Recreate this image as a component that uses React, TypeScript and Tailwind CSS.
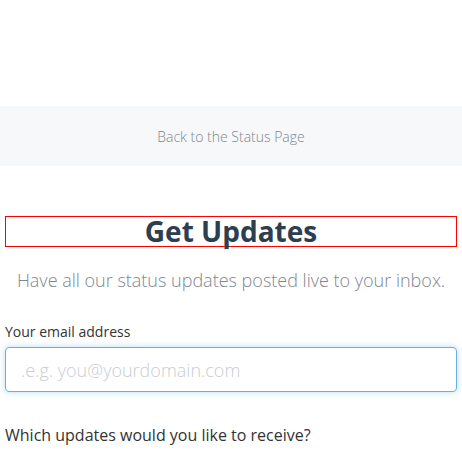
export default function App() {
  return (
    <div className="min-h-[462px] bg-white font-['Open_Sans',sans-serif]">
      <div className="h-[106px]" />
      <div className="flex h-[60px] items-center justify-center bg-[#f7f8f9]">
        <a className="text-[14px] font-light text-[#7e8690]">Back to the Status Page</a>
      </div>
      <div className="px-[5px] pt-[50px]">
        <h1 className="border border-[#ff0000] text-center text-[28px] font-bold leading-[29px] text-[#2c3e50]">
          Get Updates
        </h1>
        <p className="mt-[20px] text-center text-[18px] font-light leading-[26px] text-[#7e8690]">
          Have all our status updates posted live to your inbox.
        </p>
        <label className="mt-[29px] block text-[14px] leading-[20px] text-[#333]">Your email address</label>
        <input
          className="mt-[5px] block h-[45px] w-[452px] rounded-[4px] border border-[#66afe9] px-[15px] text-[18px] font-light shadow-[0_0_6px_rgba(102,175,233,0.45)] outline-none placeholder:text-[#c9cdd1]"
          placeholder=".e.g. you@yourdomain.com"
        />
        <p className="mt-[32px] text-[16px] leading-[22px] text-[#333]">Which updates would you like to receive?</p>
      </div>
    </div>
  );
}
